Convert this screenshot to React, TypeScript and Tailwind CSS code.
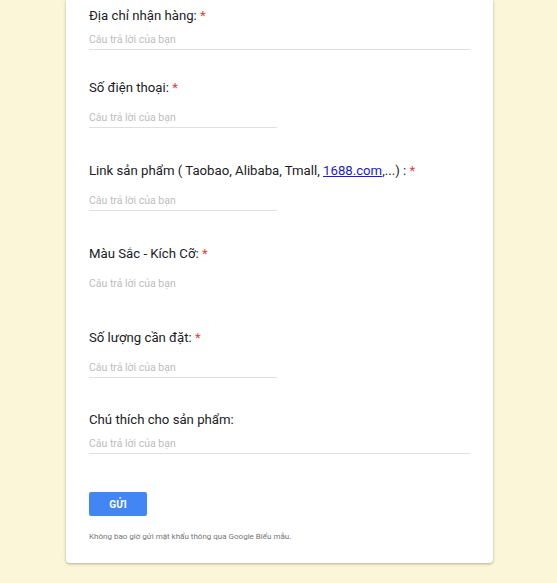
const Label = ({ children, required }: { children: React.ReactNode; required?: boolean }) => (
  <div className="text-[13.2px] leading-[16px] text-[#202124]">
    {children}
    {required && <span className="text-[#db4437]"> *</span>}
  </div>
);

const Answer = ({ wide, line = true, top }: { wide?: boolean; line?: boolean; top: string }) => (
  <div
    className={`${top} ${wide ? "w-[381px]" : "w-[188px]"} ${
      line ? "border-[#e0e0e0]" : "border-transparent"
    } border-b pb-[2px] text-[10.5px] leading-[14px] text-[#bdbdbd]`}
  >
    Câu trả lời của bạn
  </div>
);

const App = () => {
  return (
    <div
      className="min-h-screen bg-[#faf6d7]"
      style={{ fontFamily: "Roboto, 'Liberation Sans', sans-serif" }}
    >
      <div className="ml-[66px] w-[427px] bg-white rounded-b-sm shadow-[0_1px_3px_rgba(0,0,0,0.3)] px-[23px] pt-[8px] pb-[20px]">
        <Label required>Địa chỉ nhận hàng:</Label>
        <Answer wide top="mt-[9px]" />

        <div className="mt-[30px]">
          <Label required>Số điện thoại:</Label>
        </div>
        <Answer top="mt-[15px]" />

        <div className="mt-[35px]">
          <Label required>
            Link sản phẩm ( Taobao, Alibaba, Tmall,{" "}
            <a href="#" className="text-[#1a1ae6] underline">
              1688.com
            </a>
            ,...) :
          </Label>
        </div>
        <Answer top="mt-[15px]" />

        <div className="mt-[35px]">
          <Label required>Màu Sắc - Kích Cỡ:</Label>
        </div>
        <Answer line={false} top="mt-[15px]" />

        <div className="mt-[36px]">
          <Label required>Số lượng cần đặt:</Label>
        </div>
        <Answer top="mt-[15px]" />

        <div className="mt-[34px]">
          <Label>Chú thích cho sản phẩm:</Label>
        </div>
        <Answer wide top="mt-[9px]" />

        <button className="mt-[38px] w-[58px] h-[24px] rounded-[2px] bg-[#4285f4] text-white text-[10px] font-bold tracking-wide">
          GỬI
        </button>
        <p className="mt-[15px] text-[8px] leading-[12px] text-[#757575]">
          Không bao giờ gửi mật khẩu thông qua Google Biểu mẫu.
        </p>
      </div>
    </div>
  );
};

export default App;
